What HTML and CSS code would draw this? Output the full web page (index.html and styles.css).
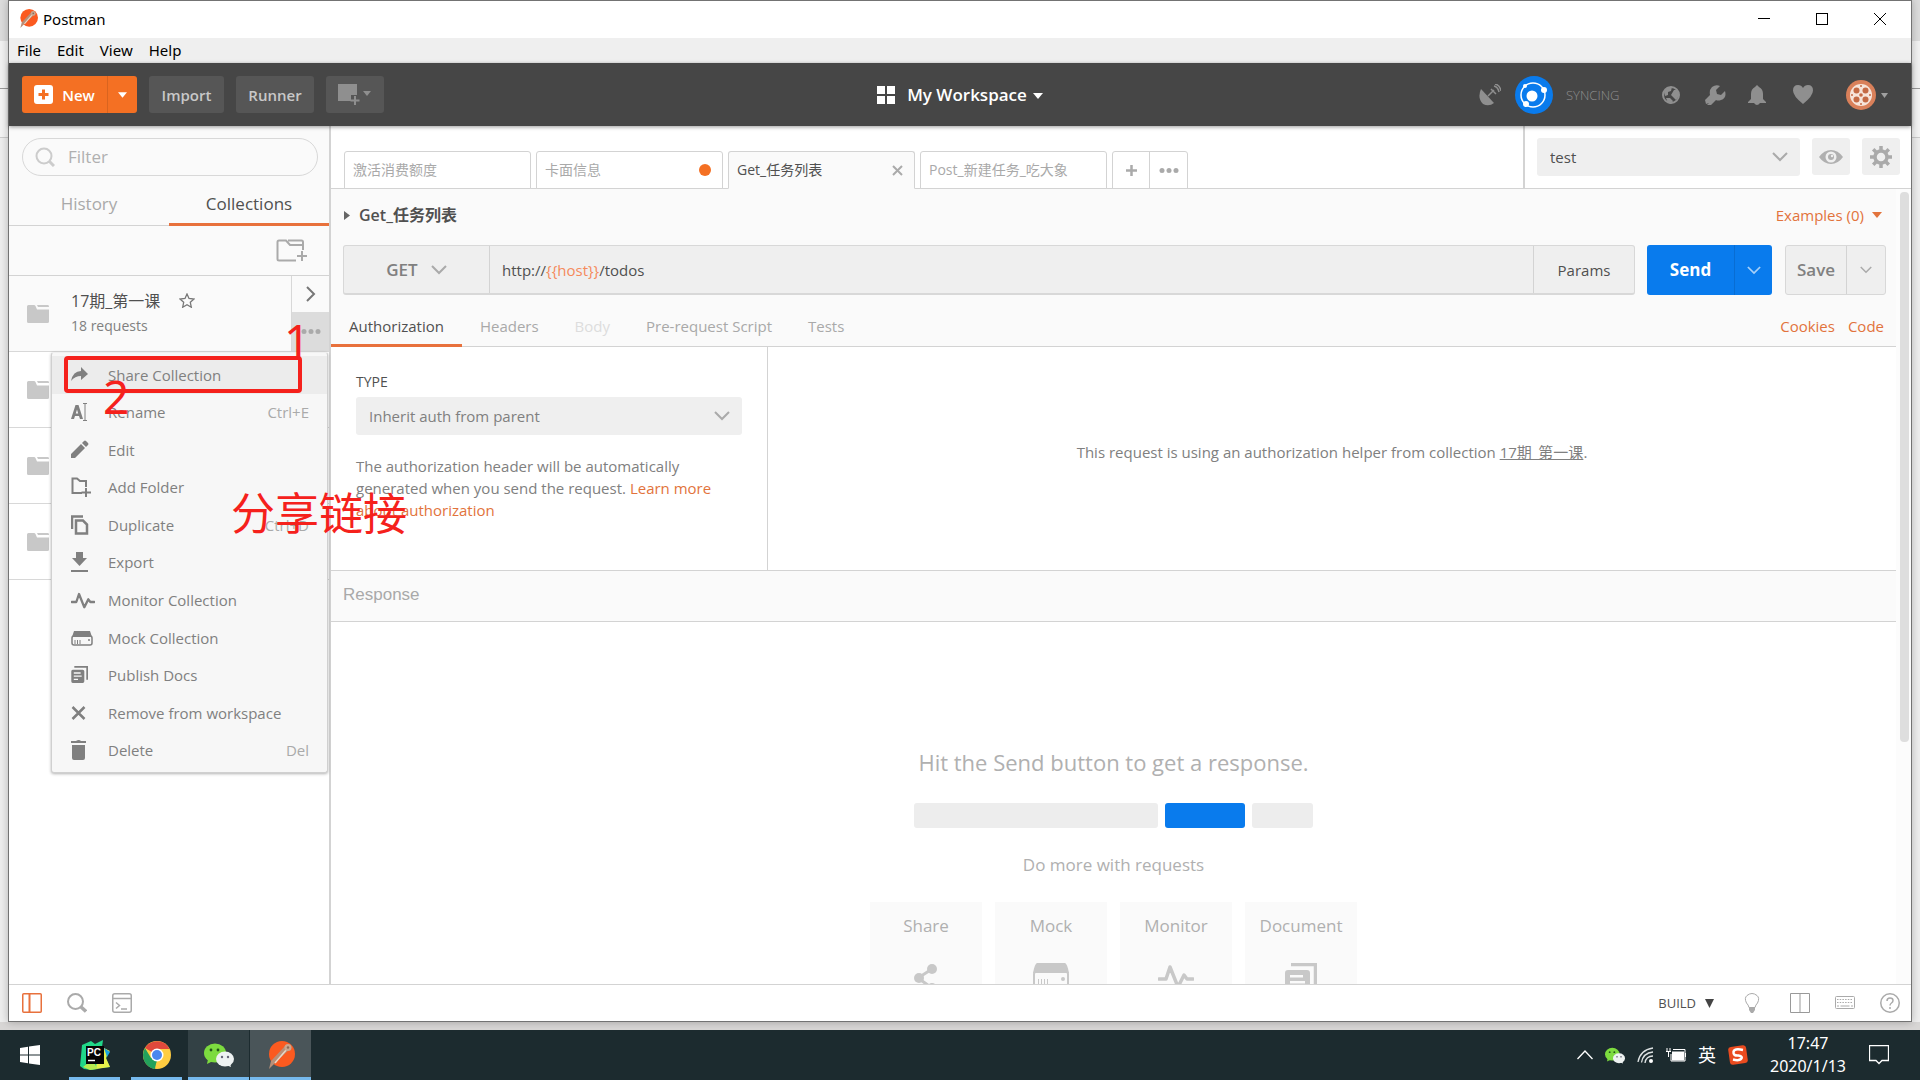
FILE: index.html
```html
<!DOCTYPE html>
<html lang="zh-CN">
<head>
<meta charset="utf-8">
<title>Postman</title>
<link rel="stylesheet" href="styles.css">
</head>
<body>
<svg class="sprite" aria-hidden="true">
  <symbol id="chev" viewBox="0 0 16 10"><path d="M1 1l7 7 7-7" fill="none" stroke="currentColor" stroke-width="2"/></symbol>
  <symbol id="caret" viewBox="0 0 10 6"><path d="M0 0h10L5 6z" fill="currentColor"/></symbol>
  <symbol id="folder" viewBox="0 0 22 18"><path d="M0 1.500q0-1.500 1.500-1.500h5.500q1 0 1.500 1l1.500 3.500h12v12q0 1.500-1.500 1.500h-19q-1.500 0-1.500-1.500zM10 0h11q1 0 1 2h-11z" fill="currentColor"/></symbol>
  <symbol id="pulse" viewBox="0 0 36 26"><path d="M1 16h7l4-12 8 20 6-12 3 4h6" fill="none" stroke="currentColor" stroke-width="3.500" stroke-linejoin="round" stroke-linecap="round"/></symbol>
  <symbol id="docs" viewBox="0 0 32 32"><path d="M6 1.500h24.500V26" fill="none" stroke="currentColor" stroke-width="3.500"/><path fill-rule="evenodd" d="M3 7h19q3 0 3 3v19q0 3-3 3H3q-3 0-3-3V10q0-3 3-3zm2 5v2.500h13V12zm0 6v2.500h15V18zm0 6v2.500h8V24z" fill="currentColor"/></symbol>
  <symbol id="wechat" viewBox="0 0 30 24"><ellipse cx="11" cy="10" rx="11" ry="9.500" fill="#7ddb3f"/><path d="M4 16l-1 5 6-3z" fill="#7ddb3f"/><circle cx="7" cy="7" r="1.400" fill="#23571a"/><circle cx="14" cy="7" r="1.400" fill="#23571a"/><ellipse cx="21" cy="16" rx="9" ry="7.500" fill="#eef2f2"/><path d="M26 20l1 4-5-2z" fill="#eef2f2"/><circle cx="18" cy="14" r="1.200" fill="#667"/><circle cx="24" cy="14" r="1.200" fill="#667"/></symbol>
  <symbol id="postman" viewBox="0 0 28 28"><circle cx="15" cy="13" r="13" fill="#fb5a20"/><path d="M24 7L10 20l-8 8 2-8L19 4z" fill="#b98f78"/><path d="M20 8L8 22" stroke="#e8d8c8" stroke-width="1.500"/><circle cx="21" cy="6.500" r="3.500" fill="#c9a78f"/><circle cx="21" cy="6.500" r="1.200" fill="#8a6a58"/></symbol>
</svg>

<div class="desktop">
  <div class="window">
    <header class="titlebar">
      <svg class="app-logo"><use href="#postman"/></svg>
      <span class="title">Postman</span>
      <div class="win-controls">
        <button aria-label="Minimize"><svg width="12" height="12"><path d="M0 5.500h12" stroke="#000"/></svg></button>
        <button aria-label="Maximize"><svg width="12" height="12"><rect x=".5" y=".5" width="11" height="11" fill="none" stroke="#000"/></svg></button>
        <button aria-label="Close"><svg width="12" height="12"><path d="M0 0l12 12M12 0L0 12" stroke="#000"/></svg></button>
      </div>
    </header>
    <nav class="menubar">
      <button>File</button><button>Edit</button><button>View</button><button>Help</button>
    </nav>

    <div class="toolbar">
      <div class="tool-left">
        <div class="new-group">
          <button class="new-main"><svg width="19" height="19"><rect width="19" height="19" rx="3" fill="#fff"/><path d="M9.500 4.500v10M4.500 9.500h10" stroke="#f47023" stroke-width="3"/></svg>New</button>
          <button class="new-more" aria-label="More new options"><svg width="9" height="6"><use href="#caret"/></svg></button>
        </div>
        <button class="tool-btn">Import</button>
        <button class="tool-btn runner">Runner</button>
        <button class="tool-btn window-btn" aria-label="New window"><svg width="34" height="24"><path d="M0 1h19v11h-6v6H0z" fill="currentColor"/><path d="M17 13v9M12.500 17.500h9" stroke="currentColor" stroke-width="2"/><path d="M25 8h8l-4 5z" fill="currentColor"/></svg></button>
      </div>
      <button class="workspace"><svg width="18" height="18"><path d="M0 0h8v8H0zM10 0h8v8h-8zM0 10h8v8H0zM10 10h8v8h-8z" fill="#fff"/></svg>My Workspace<svg class="ws-caret" width="10" height="6"><use href="#caret"/></svg></button>
      <div class="tool-right">
        <button class="dish" aria-label="Capture"><svg width="22" height="22"><path d="M2 5l13 14q-5 4-11 1Q-2 14 2 5z" fill="currentColor"/><path d="M9 12l6-6M12 5l5 5M15 2q4 1 5 6M16 0q5 1 6 7" fill="none" stroke="currentColor" stroke-width="1.500"/></svg></button>
        <button class="sync" aria-label="Sync"><svg width="38" height="38"><circle cx="19" cy="19" r="19" fill="#097bed"/><circle cx="18" cy="19" r="12" fill="none" stroke="#fff" stroke-width="1.500"/><circle cx="17" cy="20" r="5.500" fill="#fff"/><circle cx="29" cy="14" r="3" fill="#fff"/><circle cx="11" cy="28" r="3" fill="#fff"/><circle cx="10" cy="10" r="2" fill="#fff"/></svg></button>
        <span class="syncing">SYNCING</span>
        <button class="globe" aria-label="Network"><svg width="18" height="18"><circle cx="9" cy="9" r="8" fill="none" stroke="currentColor" stroke-width="2"/><path d="M2 6l3-5 5 0-1 4-3 1 0 3-3 1zM12 4l4 0 1 6-3 4-3-3-2-2zM4 12l4 0 3 3-2 3-3-1z" fill="currentColor"/></svg></button>
        <button class="wrench" aria-label="Settings"><svg width="22" height="20"><path d="M8 2q4-3 8-1l-4 4 1 4 4 1 4-4q2 7-4 9-3 1-5 0l-5 5H3l2-2-3 1-1-4 5-5Q5 5 8 2z" fill="currentColor"/></svg></button>
        <button class="bell" aria-label="Notifications"><svg width="18" height="20"><path d="M9 0l2 2q4 2 4 7v5l3 3v1H0v-1l3-3V9q0-5 4-7zM6 18h6q-3 4-6 0z" fill="currentColor"/></svg></button>
        <button class="heart" aria-label="Support"><svg width="20" height="19"><path d="M10 19Q0 11 0 5.500 0 0 5 0q3.500 0 5 3 1.500-3 5-3 5 0 5 5.500Q20 11 10 19z" fill="currentColor"/></svg></button>
        <button class="avatar" aria-label="Account"><svg width="42" height="30"><circle cx="15" cy="15" r="15" fill="#d9805a"/><circle cx="15" cy="15" r="11" fill="#f6e4da"/><g fill="#c46a45"><circle cx="10.500" cy="10.500" r="3"/><circle cx="19.500" cy="10.500" r="3"/><circle cx="10.500" cy="19.500" r="3"/><circle cx="19.500" cy="19.500" r="3"/><circle cx="15" cy="15" r="1.800"/><circle cx="15" cy="6" r="1"/><circle cx="15" cy="24" r="1"/><circle cx="6" cy="15" r="1"/><circle cx="24" cy="15" r="1"/></g><path d="M35 13h7l-3.500 5z" fill="#a0a0a0"/></svg></button>
      </div>
    </div>

    <div class="body">
      <aside class="sidebar">
        <div class="side-top">
          <label class="filter"><svg width="20" height="20"><circle cx="9" cy="9" r="7.500" fill="none" stroke="currentColor" stroke-width="2"/><path d="M14 14l5 5" stroke="currentColor" stroke-width="3"/></svg><input type="text" placeholder="Filter" aria-label="Filter"></label>
          <div class="side-tabs"><button>History</button><button class="on">Collections</button></div>
        </div>
        <div class="side-tools"><button aria-label="New collection"><svg width="31" height="26"><path d="M20 21.500H3q-1.500 0-1.500-1.500V3q0-1.500 1.500-1.500h7l4 4.500h13V3q0-1.500-1.500-1.500H12M27 6v5M26 12v10M21 17h10" fill="none" stroke="currentColor" stroke-width="2"/></svg></button></div>
        <ul class="collections">
          <li class="first">
            <svg class="folder"><use href="#folder"/></svg>
            <div class="coll-text"><div class="coll-name">17期_第一课<svg width="16" height="15" viewBox="0 0 16 15"><path d="M8 1l2 4.500 5 .5-3.700 3.300 1 4.900L8 11.700l-4.300 2.500 1-4.900L1 6l5-.5z" fill="none" stroke="#777" stroke-width="1.300"/></svg></div><div class="coll-count">18 requests</div></div>
            <div class="coll-actions"><button aria-label="Open details"><svg width="10" height="16"><path d="M1 1l7 7-7 7" fill="none" stroke="#777" stroke-width="2"/></svg></button><button class="dots" aria-label="More actions"><svg width="20" height="5"><g fill="#aaa"><circle cx="3" cy="2.500" r="2.500"/><circle cx="10" cy="2.500" r="2.500"/><circle cx="17" cy="2.500" r="2.500"/></g></svg></button></div>
            <div class="context-menu" role="menu">
              <button role="menuitem" class="hover"><svg viewBox="0 0 24 20"><path d="M0 16Q2 6 10 6V2l7 7-7 6v-4q-6 0-10 5z" fill="currentColor"/></svg><span>Share Collection</span></button>
              <button role="menuitem"><svg viewBox="0 0 24 20"><path fill-rule="evenodd" d="M0 17L4.500 3h3L12 17H9l-1-3H4l-1 3zM4.800 11.500h2.400L6 7.500z" fill="currentColor"/><path d="M12 1.500h4M12 18.500h4M14 1.500v17" stroke="currentColor" stroke-width="1"/></svg><span>Rename</span><kbd>Ctrl+E</kbd></button>
              <button role="menuitem"><svg viewBox="0 0 24 20"><path d="M0 18v-4L10 4l4 4L4 18zM11 3l2-2q1-1 2 0l2 2q1 1 0 2l-2 2z" fill="currentColor"/></svg><span>Edit</span></button>
              <button role="menuitem"><svg viewBox="0 0 24 20"><path d="M11 16H1.500V1.500H6L9 4h6v6M15 11v9M10.500 15.500H20" fill="none" stroke="currentColor" stroke-width="2"/></svg><span>Add Folder</span></button>
              <button role="menuitem"><svg viewBox="0 0 24 20"><path d="M1 14V1.500h11M5 5.500h7l4 4v9H5z" fill="none" stroke="currentColor" stroke-width="2.500"/></svg><span>Duplicate</span><kbd>Ctrl+D</kbd></button>
              <button role="menuitem"><svg viewBox="0 0 24 20"><path d="M5 0h7v6h4l-7.500 8L1 6h4zM0 18h17v2H0z" fill="currentColor"/></svg><span>Export</span></button>
              <button role="menuitem"><svg viewBox="0 0 36 26"><use href="#pulse"/></svg><span>Monitor Collection</span></button>
              <button role="menuitem"><svg viewBox="0 0 24 20"><path d="M3 3h16l2 6H1z" fill="currentColor"/><rect x="1" y="8" width="20" height="9" rx="2" fill="none" stroke="currentColor" stroke-width="1.500"/><path d="M4 12v4M6.500 12v4M9 12v4" stroke="currentColor"/><circle cx="18" cy="12" r="1" fill="currentColor"/></svg><span>Mock Collection</span></button>
              <button role="menuitem"><svg viewBox="0 0 45 38"><use href="#docs" width="32" height="32" y="2"/></svg><span>Publish Docs</span></button>
              <button role="menuitem"><svg viewBox="0 0 24 20"><path d="M1.500 4l12 12M13.500 4l-12 12" stroke="currentColor" stroke-width="2.500"/></svg><span>Remove from workspace</span></button>
              <button role="menuitem"><svg viewBox="0 0 24 20"><path d="M0 1h5q3-2 5 0h5v2H0zM1 5h13v13q0 2-2 2H3q-2 0-2-2z" fill="currentColor"/></svg><span>Delete</span><kbd>Del</kbd></button>
            </div>
          </li>
          <li><svg class="folder"><use href="#folder"/></svg></li>
          <li><svg class="folder"><use href="#folder"/></svg></li>
          <li><svg class="folder"><use href="#folder"/></svg></li>
        </ul>
      </aside>

      <main class="main">
        <div class="tabrow">
          <div class="tabs">
            <button class="tab">激活消费额度</button>
            <button class="tab">卡面信息<i class="unsaved"></i></button>
            <button class="tab active">Get_任务列表<svg width="11" height="11"><path d="M1 1l9 9M10 1l-9 9" stroke="#aaa" stroke-width="2"/></svg></button>
            <button class="tab">Post_新建任务_吃大象</button>
            <div class="tab-tools"><button aria-label="New tab"><svg width="11" height="11"><path d="M5.500 0v11M0 5.500h11" stroke="#aaa" stroke-width="2.500"/></svg></button><button aria-label="Tab options"><svg width="20" height="5"><g fill="#aaa"><circle cx="3" cy="2.500" r="2.500"/><circle cx="10" cy="2.500" r="2.500"/><circle cx="17" cy="2.500" r="2.500"/></g></svg></button></div>
          </div>
          <div class="env">
            <div class="select env-select"><select aria-label="Environment"><option>test</option></select><svg width="16" height="10"><use href="#chev"/></svg></div>
            <button class="env-btn" aria-label="Environment quick look"><svg width="24" height="16"><path d="M0 8Q5 1 12 1t12 7q-5 7-12 7T0 8z" fill="#b0b0b0"/><circle cx="12" cy="8" r="5.500" fill="#efefef"/><circle cx="12" cy="8" r="3" fill="#b0b0b0"/><circle cx="13" cy="7" r="1.200" fill="#efefef"/></svg></button>
            <button class="env-btn" aria-label="Manage environments"><svg width="22" height="22"><circle cx="11" cy="11" r="6" fill="none" stroke="#aaa" stroke-width="3.500"/><path d="M11 0v4M11 18v4M0 11h4M18 11h4M3.200 3.200l3 3M15.800 15.800l3 3M3.200 18.800l3-3M15.800 6.200l3-3" stroke="#aaa" stroke-width="3.500"/></svg></button>
          </div>
        </div>

        <div class="pane">
          <div class="pane-content">
            <section class="request">
              <div class="req-title"><svg width="6" height="9"><path d="M0 0l6 4.500L0 9z" fill="#666"/></svg><h1>Get_任务列表</h1><button class="link examples">Examples (0)<svg width="10" height="6"><use href="#caret"/></svg></button></div>
              <div class="url-row">
                <div class="url-box">
                  <button class="method">GET<svg width="16" height="10"><use href="#chev"/></svg></button>
                  <div class="url" role="textbox" contenteditable="true" aria-label="Request URL" spellcheck="false">http://<span>{{host}}</span>/todos</div>
                  <button class="params">Params</button>
                </div>
                <div class="send"><button class="send-main">Send</button><button class="send-more" aria-label="Send options"><svg width="14" height="9"><use href="#chev"/></svg></button></div>
                <div class="save"><button class="save-main">Save</button><button class="save-more" aria-label="Save options"><svg width="12" height="8"><use href="#chev"/></svg></button></div>
              </div>
              <div class="req-tabs">
                <button class="on">Authorization</button><button>Headers</button><button disabled>Body</button><button>Pre-request Script</button><button>Tests</button>
                <div class="req-links"><button class="link">Cookies</button><button class="link">Code</button></div>
              </div>
            </section>
            <section class="auth">
              <div class="auth-left">
                <label for="auth-type">TYPE</label>
                <div class="select auth-select"><select id="auth-type"><option>Inherit auth from parent</option></select><svg width="16" height="10"><use href="#chev"/></svg></div>
                <p>The authorization header will be automatically generated when you send the request. <a href="#">Learn more about authorization</a></p>
              </div>
              <div class="auth-right"><p>This request is using an authorization helper from collection <a href="#">17期_第一课</a>.</p></div>
            </section>
            <h2 class="response">Response</h2>
            <section class="empty">
              <p class="hit">Hit the Send button to get a response.</p>
              <div class="bars"><i class="b1"></i><i class="b2"></i><i class="b3"></i></div>
              <p class="more">Do more with requests</p>
              <div class="cards">
                <button>Share<svg width="36" height="32" viewBox="0 0 36 32"><path d="M24 6L10 15l14 10" fill="none" stroke="currentColor" stroke-width="3"/><circle cx="24" cy="6" r="5" fill="currentColor"/><circle cx="11" cy="15" r="5" fill="currentColor"/><circle cx="24" cy="25" r="5" fill="currentColor"/></svg></button>
                <button>Mock<svg width="36" height="32" viewBox="0 0 36 32"><path d="M4 0h28q2 0 4 10H0Q2 0 4 0z" fill="currentColor"/><rect x="1" y="9" width="34" height="20" rx="2" fill="none" stroke="currentColor" stroke-width="2"/><path d="M5.500 16v8M8.500 16v8M11.500 16v8M14.500 16v8" stroke="currentColor"/><circle cx="30" cy="16" r="2" fill="currentColor"/></svg></button>
                <button>Monitor<svg width="36" height="26"><use href="#pulse"/></svg></button>
                <button>Document<svg width="32" height="32"><use href="#docs"/></svg></button>
              </div>
            </section>
          </div>
          <div class="scrollbar"><i></i></div>
        </div>
      </main>
    </div>

    <footer class="statusbar">
      <div class="status-left">
        <button aria-label="Toggle sidebar"><svg width="20" height="20"><rect x=".75" y=".75" width="18.500" height="18.500" rx="1" fill="none" stroke="#e8713c" stroke-width="1.500"/><path d="M7.500 0v20" stroke="#e8713c" stroke-width="2"/></svg></button>
        <button aria-label="Find"><svg width="20" height="20"><circle cx="8.500" cy="8.500" r="7.500" fill="none" stroke="#aaa" stroke-width="2"/><path d="M13.500 13.500l5.500 5" stroke="#aaa" stroke-width="3.500"/></svg></button>
        <button aria-label="Console"><svg width="20" height="20"><rect x=".75" y=".75" width="18.500" height="18.500" rx="2" fill="none" stroke="#aaa" stroke-width="1.500"/><path d="M0 5.500h20M4 9.500l3.500 3L4 15.500M9 16h6" fill="none" stroke="#aaa" stroke-width="1.500"/></svg></button>
      </div>
      <div class="status-right">
        <button class="build">BUILD<svg width="9" height="9"><path d="M0 0h9L4.500 9z" fill="#444"/></svg></button>
        <button class="tips" aria-label="Tips"><svg width="20" height="20"><path d="M7 14.500Q6.500 12 4.500 10 2 5 5 2.500 7.500.5 10 .5t5 2Q18 5 15.500 10q-2 2-2.500 4.500z" fill="none" stroke="#aaa"/><path d="M7 14.500h6V17l-2 3H9l-2-3z" fill="#aaa"/></svg></button>
        <button aria-label="Two pane view"><svg width="20" height="20"><path d="M.5.5h19v19H.5zM10 0v20" fill="none" stroke="#999"/></svg></button>
        <button aria-label="Keyboard shortcuts"><svg width="20" height="20"><rect x=".5" y="3.500" width="19" height="12" rx="1" fill="none" stroke="#aaa"/><path d="M2 6.500h16M2 9.500h16" stroke="#aaa" stroke-dasharray="1.500 1.200"/><path d="M2 13h2M5.500 13h9M16 13h2" stroke="#aaa"/></svg></button>
        <button aria-label="Help" class="help"><svg width="20" height="20"><circle cx="10" cy="10" r="9.250" fill="none" stroke="#aaa" stroke-width="1.500"/><path d="M7 8q0-3 3-3t3 2.500q0 1.500-1.500 2.500T10 12.500M10 14v2" fill="none" stroke="#aaa" stroke-width="1.500"/></svg></button>
      </div>
    </footer>
  </div>
</div>

<div class="taskbar">
  <button class="start" aria-label="Start"><svg width="20" height="20"><path d="M0 3l8-1.200V9.500H0zM9 1.600L20 0v9.500H9zM0 10.500h8v7.700L0 17zM9 10.500h11V20L9 18.400z" fill="#fff"/></svg></button>
  <button class="app" aria-label="PyCharm"><svg width="30" height="30"><path d="M2 5l9-4 4 3 8-4-1 7 6 4-2 8 4 8-9 1-9 2-8-1-4-3 1-10z" fill="#21d789"/><path d="M16 29l14-2-4-9 2-5 2-2-6-3-7 10z" fill="#e7f04a"/><path d="M24 8l6 4-3 5z" fill="#19a5e0"/><path d="M3 27l9-7 6 9-8 1z" fill="#b8ec50"/><rect x="6" y="6" width="18" height="18" fill="#050505"/><text x="7" y="16" class="pc">PC</text><path d="M8 20.500h7" stroke="#fff" stroke-width="1.500"/></svg></button>
  <button class="app" aria-label="Chrome"><svg width="28" height="28"><circle cx="14" cy="14" r="14" fill="#ffcd41"/><path d="M14 14L2 7A14 14 0 0 1 26.500 8H14z" fill="#e0493c"/><path d="M14 14l-2 14A14 14 0 0 1 2 7l6 10z" fill="#23a15c"/><path d="M8 17l6 3-3 8h1z" fill="#23a15c"/><circle cx="14" cy="14" r="6.500" fill="#fff"/><circle cx="14" cy="14" r="5" fill="#4b87ee"/></svg></button>
  <button class="app lit" aria-label="WeChat"><svg width="30" height="24"><use href="#wechat"/></svg></button>
  <button class="app lit current" aria-label="Postman"><svg width="28" height="28"><use href="#postman"/></svg></button>
  <div class="tray">
    <svg width="16" height="10"><path d="M.5 9L8 1l7.500 8" fill="none" stroke="#fff" stroke-width="1.300"/></svg>
    <svg width="20" height="17"><use href="#wechat"/></svg>
    <svg width="17" height="16"><g fill="none" stroke="#dde2e3" stroke-width="1.300"><path d="M1 15Q3 3 16 1M4.500 15.500Q6 6 16 5M8 16q1-7 8-7"/></g><circle cx="14" cy="14" r="2" fill="#fff"/></svg>
    <svg width="20" height="14"><rect x="6" y="3.500" width="12" height="9" fill="#fff"/><path d="M7 1.500h12v11.500H5V6M19.500 5v4M0 3.500h5M1 0v4M4 0v4M2.500 4v5" fill="none" stroke="#fff"/></svg>
    <span class="ime">英</span>
    <svg width="20" height="20"><rect x="1" y="1" width="18" height="18" rx="3" fill="#ea4b1f" transform="rotate(-8 10 10)"/><path d="M15 5Q6 3 5.500 7t5 3.500q5 1 2.500 3.500-2 2-8 .5" fill="none" stroke="#fff" stroke-width="2.500"/></svg>
    <div class="clock"><time>17:47</time><time>2020/1/13</time></div>
    <svg width="20" height="20"><path d="M.5.5h19v15H13l-3 3-3-3H.5z" fill="none" stroke="#fff" stroke-width="1.300"/></svg>
  </div>
</div>

<div class="mark mark-box"></div>
<div class="mark mark-one">1</div>
<div class="mark mark-two">2</div>
<div class="mark mark-text">分享链接</div>
</body>
</html>
```

FILE: styles.css
```css
* { box-sizing: border-box; }
body {
  margin: 0;
  height: 100vh;
  display: flex;
  flex-direction: column;
  overflow: hidden;
  position: relative;
  font: 15px/20px "Open Sans", "Noto Sans CJK SC", sans-serif;
  color: #505050;
}
button, input, select { font: inherit; color: inherit; border: 0; padding: 0; margin: 0; background: none; border-radius: 0; }
button { display: flex; align-items: center; justify-content: center; white-space: nowrap; }
svg { flex: none; display: block; }
h1, h2, p, ul { margin: 0; padding: 0; }
ul { list-style: none; }
a { color: #e2733c; text-decoration: none; }
.sprite { position: absolute; width: 0; height: 0; }

.desktop {
  flex: 1;
  min-height: 0;
  display: flex;
  padding: 0 8px 8px;
  background: linear-gradient(#dcdcdc 41px, #f2f2f2 41px 88px, #999 88px 89px, #f4f4f4 89px 137px, #ccc 137px 138px, #eee 138px 1022px, #d8d6d5 1022px);
}
.window {
  flex: 1;
  min-width: 0;
  display: flex;
  flex-direction: column;
  background: #fff;
  border: 1px solid #737373;
  box-shadow: 0 0 8px rgba(0, 0, 0, .25);
}

.titlebar { height: 37px; display: flex; align-items: center; padding: 0 2px 2px 10px; color: #000; }
.app-logo { width: 19px; height: 19px; }
.title { margin-left: 5px; font-family: "Noto Sans", sans-serif; }
.win-controls { margin-left: auto; display: flex; }
.win-controls button { width: 58px; height: 35px; }
.menubar { height: 25px; display: flex; gap: 16px; padding-left: 8px; background: #efefef; color: #000; font: 15px/25px "Noto Sans", sans-serif; }

.toolbar { height: 63px; display: grid; grid-template-columns: 1fr auto 1fr; align-items: center; background: #464646; box-shadow: 0 1px 4px rgba(0, 0, 0, .4); position: relative; z-index: 1; color: #8f8f8f; }
.tool-left { display: flex; align-items: center; gap: 12px; padding-left: 13px; font-weight: 600; }
.new-group { display: flex; color: #fff; background: #f47023; border-radius: 3px; }
.new-main { width: 86px; height: 37px; gap: 9px; border-right: 1px solid #d9641f; }
.new-more { width: 29px; }
.tool-btn { width: 75px; height: 37px; background: #565656; border-radius: 3px; color: #c8c8c8; }
.tool-btn.runner { width: 78px; }
.tool-btn.window-btn { width: 58px; color: #8f8f8f; }
.workspace { color: #fff; font-size: 17px; font-weight: 600; }
.workspace svg { margin-right: 12px; }
.workspace .ws-caret { margin: 2px 0 0 6px; }
.tool-right { display: flex; align-items: center; justify-content: flex-end; padding-right: 23px; }
.syncing { font-size: 13px; font-weight: 300; margin: 0 42px 0 13px; width: 54px; }
.dish { margin-right: 14px; }
.globe { margin-right: 24px; }
.wrench { margin-right: 22px; }
.bell { margin-right: 27px; }
.heart { margin-right: 33px; }

.body { flex: 1; min-height: 0; display: flex; }
.sidebar { width: 322px; flex: none; display: flex; flex-direction: column; border-right: 2px solid #d3d3d3; }
.side-top { background: #fafafa; padding-top: 12px; border-bottom: 1px solid #d3d3d3; }
.filter { display: flex; align-items: center; gap: 13px; height: 38px; margin: 0 11px 0 13px; padding: 0 12px; border: 1px solid #d8d8d8; border-radius: 19px; color: #ccc; font-size: 17px; }
.filter input { flex: 1; min-width: 0; outline: 0; }
.filter input::placeholder { color: #b0b0b0; opacity: 1; }
.side-tabs { display: flex; font-size: 17px; color: #a9a9a9; margin-bottom: -1px; }
.side-tabs button { flex: 1; height: 50px; padding-top: 8px; border-bottom: 3px solid transparent; }
.side-tabs .on { color: #505050; border-color: #e8713c; }
.side-tools { height: 50px; background: #fafafa; border-bottom: 1px solid #d3d3d3; display: flex; justify-content: flex-end; padding-right: 22px; padding-top: 2px; color: #aaa; }
.collections li { height: 76px; display: flex; align-items: center; padding-left: 18px; border-bottom: 1px solid #d8d8d8; position: relative; }
.collections .first { background: #fafafa; }
.folder { width: 22px; height: 18px; color: #c8c8c8; }
.coll-text { margin-left: 22px; flex: 1; }
.coll-name { display: flex; align-items: center; gap: 19px; font-size: 16px; line-height: 24px; }
.coll-count { font-size: 14px; color: #808080; line-height: 26px; }
.coll-actions { width: 38px; align-self: stretch; display: grid; grid-template-rows: 36px 1fr; border-left: 1px solid #d8d8d8; }
.dots { background: #dcdcdc; }

.context-menu {
  position: absolute; left: 42px; top: 76px; z-index: 2; width: 277px; padding: 3px 0;
  display: grid; grid-template-rows: repeat(11, 1fr); height: 421px;
  background: #f7f7f7; border: 1px solid #d0d0d0; border-top-color: #f0f0f0; border-radius: 3px; box-shadow: 0 1px 3px rgba(0, 0, 0, .3);
}
.context-menu button { justify-content: flex-start; padding: 0 18px 0 19px; color: #808080; }
.context-menu .hover { background: #ececec; }
.context-menu svg { width: 24px; height: 20px; }
.context-menu span { margin-left: 13px; }
.context-menu kbd { margin-left: auto; font: inherit; color: #aaa; }

.main { flex: 1; min-width: 0; display: flex; flex-direction: column; }
.tabrow { height: 63px; display: flex; justify-content: space-between; border-bottom: 1px solid #d3d3d3; }
.tabs { display: flex; align-items: flex-end; gap: 5px; padding-left: 13px; margin-bottom: -1px; font-size: 14px; }
.tab { width: 187px; height: 38px; justify-content: space-between; padding: 0 11px 0 8px; border: 1px solid #d3d3d3; border-radius: 3px 3px 0 0; background: #fff; color: #a9a9a9; }
.tab.active { background: #fafafa; border-bottom-color: #fafafa; color: #505050; }
.unsaved { width: 12px; height: 12px; border-radius: 50%; background: #f47023; }
.tab-tools { display: flex; height: 38px; border: 1px solid #d3d3d3; border-radius: 3px 3px 0 0; }
.tab-tools button { width: 36px; }
.tab-tools button + button { width: 38px; border-left: 1px solid #d3d3d3; }
.env { display: flex; align-items: flex-start; gap: 12px; padding: 12px 11px 0 12px; border-left: 2px solid #d3d3d3; }
.select { position: relative; background: #efefef; border-radius: 3px; height: 38px; color: #aaa; }
.select select { appearance: none; width: 100%; height: 38px; padding: 0 40px 0 13px; outline: 0; color: #505050; }
.select svg { position: absolute; right: 12px; top: 14px; pointer-events: none; }
.env-select { width: 263px; }
.env-btn { width: 38px; height: 37px; background: #efefef; border-radius: 3px; }

.pane { flex: 1; min-height: 0; display: flex; overflow: hidden; }
.pane-content { flex: 1; min-width: 0; }
.scrollbar { width: 15px; padding: 3px 2px 3px 4px; background: #fcfcfc; }
.scrollbar i { display: block; height: 550px; border-radius: 4px; background: #dedede; }
.request { background: #fafafa; border-bottom: 1px solid #d3d3d3; }
.req-title { display: flex; align-items: center; height: 56px; padding: 0 14px 4px 13px; }
.req-title h1 { font-size: 16px; font-weight: 600; margin-left: 9px; }
.link { color: #e2733c; }
.examples { margin-left: auto; gap: 8px; }
.url-row { display: flex; height: 50px; padding: 0 10px 0 12px; }
.url-box { flex: 1; display: flex; border: 1px solid #d8d8d8; border-bottom-width: 2px; border-radius: 3px; background: #efefef; margin-right: 12px; }
.method { width: 146px; gap: 13px; border-right: 1px solid #d3d3d3; font-size: 17px; font-weight: 600; color: #808080; }
.method svg { color: #aaa; }
.url { flex: 1; padding: 0 12px; line-height: 48px; outline: 0; }
.url span { color: #f58a5c; }
.params { width: 101px; border-left: 1px solid #d3d3d3; }
.send { display: flex; width: 125px; background: #097bed; border-radius: 3px; color: #fff; font-size: 17px; font-weight: 700; }
.send-main { flex: 1; border-right: 1px solid #086dd3; }
.send-more { width: 37px; color: #a8d0f8; }
.save { display: flex; width: 101px; margin-left: 13px; background: #efefef; border: 1px solid #d8d8d8; border-radius: 3px; color: #808080; font-size: 17px; font-weight: 600; }
.save-main { flex: 1; border-right: 1px solid #d3d3d3; }
.save-more { width: 38px; color: #aaa; }
.req-tabs { display: flex; height: 52px; margin-bottom: -1px; color: #a9a9a9; padding-top: 8px; }
.req-tabs > button { padding: 5px 18px 0; border-bottom: 3px solid transparent; }
.req-tabs > button:disabled { color: #ddd; }
.req-tabs > .on { color: #505050; border-color: #e8713c; }
.req-links { margin-left: auto; display: flex; gap: 13px; padding: 2px 12px 0 0; }

.auth { display: flex; height: 223px; }
.auth-left { width: 437px; padding: 24px 25px 0; border-right: 1px solid #d3d3d3; }
.auth-left label { display: block; font-size: 14px; line-height: 22px; margin-bottom: 4px; }
.auth-select select { color: #808080; }
.auth-left p { margin-top: 20px; line-height: 22px; color: #808080; }
.auth-right { flex: 1; display: flex; justify-content: center; padding-top: 95px; color: #808080; }
.auth-right a { color: inherit; text-decoration: underline; }
.response { height: 52px; padding-left: 12px; background: #fafafa; border: solid #d3d3d3; border-width: 1px 0; font: 17px/48px "Liberation Sans", sans-serif; color: #a9a9a9; }
.empty { display: flex; flex-direction: column; align-items: center; padding-top: 124px; color: #b0b0b0; font-size: 17px; }
.hit { font-size: 22px; line-height: 32px; }
.bars { display: flex; gap: 7px; margin: 25px 0 24px; }
.bars i { height: 25px; border-radius: 3px; background: #ededed; }
.bars .b1 { width: 244px; }
.bars .b2 { width: 80px; background: #097bed; }
.bars .b3 { width: 61px; }
.more { line-height: 26px; }
.cards { display: flex; gap: 13px; margin-top: 24px; }
.cards button { width: 112px; height: 140px; flex-direction: column; justify-content: flex-start; padding-top: 10px; line-height: 28px; gap: 23px; background: #fafafa; }
.cards svg { color: #c8c8c8; }

.statusbar { height: 37px; display: flex; align-items: center; justify-content: space-between; border-top: 1px solid #d3d3d3; background: #fff; position: relative; z-index: 1; }
.status-left { display: flex; gap: 25px; padding-left: 13px; }
.status-right { display: flex; gap: 25px; padding-right: 11px; }
.build { font-size: 13px; gap: 9px; margin-right: 3px; }
.tips { margin-right: 3px; }

.taskbar { height: 50px; flex: none; display: flex; background: #1c2b2f; color: #fff; }
.start { width: 60px; }
.app { width: 51px; border-bottom: 3px solid #76b9ed; margin-left: 11px; padding-top: 3px; }
.start + .app { margin-left: 9px; }
.app.lit { width: 61px; margin-left: 6px; background: #334145; }
.app.lit.current { margin-left: 1px; background: #4a5559; }
.pc { font: 700 10px "Liberation Sans", sans-serif; fill: #fff; }
.tray { margin-left: auto; display: flex; align-items: center; gap: 12px; padding-right: 31px; }
.ime { font-size: 18px; line-height: 24px; }
.clock { display: flex; flex-direction: column; align-items: center; width: 96px; margin: 0 1px 0 0; font: 16px/23px "Noto Sans", sans-serif; }

.mark { position: absolute; z-index: 5; color: #f5211c; font: 46px/46px "Noto Sans", "Noto Sans CJK SC", sans-serif; pointer-events: none; }
.mark-box { left: 64px; top: 356px; width: 238px; height: 37px; border: 4px solid #f5211c; border-radius: 4px; }
.mark-one { left: 284px; top: 317px; }
.mark-two { left: 103px; top: 373px; }
.mark-text { left: 231px; top: 490px; font-size: 44px; }
```
